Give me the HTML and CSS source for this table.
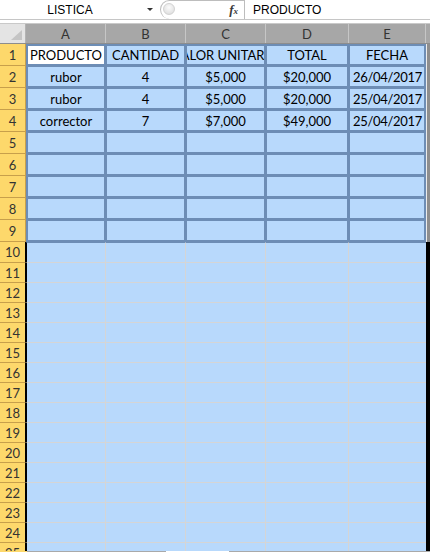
FILE: index.html
```html
<!DOCTYPE html>
<html lang="es">
<head>
<meta charset="utf-8">
<title>LISTICA</title>
<link rel="stylesheet" href="styles.css">
</head>
<body>
<div class="page">
  <div class="fbar">
    <div class="namebox">LISTICA</div>
    <div class="nb-arrow"><span class="tri"></span></div>
    <div class="pill">
      <span class="knob"></span>
      <span class="fx">f<span class="x">x</span></span>
    </div>
    <div class="formula">PRODUCTO</div>
  </div>
  <div class="fgap"></div>
  <div class="sheet">
    <div class="row hdr">
      <div class="corner"><span class="ctri"></span></div>
      <div class="ch">A</div><div class="ch">B</div><div class="ch">C</div><div class="ch">D</div><div class="ch">E</div><div class="ch edge"></div>
    </div>

    <div class="row dr first">
      <div class="rh">1</div>
      <div class="c active">PRODUCTO</div><div class="c">CANTIDAD</div><div class="c clip"><span>VALOR UNITARIO</span></div><div class="c">TOTAL</div><div class="c">FECHA</div><div class="edge"></div>
    </div>
    <div class="row dr">
      <div class="rh">2</div>
      <div class="c">rubor</div><div class="c">4</div><div class="c">$5,000</div><div class="c">$20,000</div><div class="c date">26/04/2017</div><div class="edge"></div>
    </div>
    <div class="row dr">
      <div class="rh">3</div>
      <div class="c">rubor</div><div class="c">4</div><div class="c">$5,000</div><div class="c">$20,000</div><div class="c date">25/04/2017</div><div class="edge"></div>
    </div>
    <div class="row dr">
      <div class="rh">4</div>
      <div class="c">corrector</div><div class="c">7</div><div class="c">$7,000</div><div class="c">$49,000</div><div class="c date">25/04/2017</div><div class="edge"></div>
    </div>
    <div class="row dr"><div class="rh">5</div><div class="c"></div><div class="c"></div><div class="c"></div><div class="c"></div><div class="c"></div><div class="edge"></div></div>
    <div class="row dr"><div class="rh">6</div><div class="c"></div><div class="c"></div><div class="c"></div><div class="c"></div><div class="c"></div><div class="edge"></div></div>
    <div class="row dr"><div class="rh">7</div><div class="c"></div><div class="c"></div><div class="c"></div><div class="c"></div><div class="c"></div><div class="edge"></div></div>
    <div class="row dr"><div class="rh">8</div><div class="c"></div><div class="c"></div><div class="c"></div><div class="c"></div><div class="c"></div><div class="edge"></div></div>
    <div class="row dr"><div class="rh">9</div><div class="c"></div><div class="c"></div><div class="c"></div><div class="c"></div><div class="c"></div><div class="edge"></div></div>

    <div class="row er after"><div class="rh">10</div><div class="c"></div><div class="c"></div><div class="c"></div><div class="c"></div><div class="c"></div><div class="edge"></div></div>
    <div class="row er"><div class="rh">11</div><div class="c"></div><div class="c"></div><div class="c"></div><div class="c"></div><div class="c"></div><div class="edge"></div></div>
    <div class="row er"><div class="rh">12</div><div class="c"></div><div class="c"></div><div class="c"></div><div class="c"></div><div class="c"></div><div class="edge"></div></div>
    <div class="row er"><div class="rh">13</div><div class="c"></div><div class="c"></div><div class="c"></div><div class="c"></div><div class="c"></div><div class="edge"></div></div>
    <div class="row er"><div class="rh">14</div><div class="c"></div><div class="c"></div><div class="c"></div><div class="c"></div><div class="c"></div><div class="edge"></div></div>
    <div class="row er"><div class="rh">15</div><div class="c"></div><div class="c"></div><div class="c"></div><div class="c"></div><div class="c"></div><div class="edge"></div></div>
    <div class="row er"><div class="rh">16</div><div class="c"></div><div class="c"></div><div class="c"></div><div class="c"></div><div class="c"></div><div class="edge"></div></div>
    <div class="row er"><div class="rh">17</div><div class="c"></div><div class="c"></div><div class="c"></div><div class="c"></div><div class="c"></div><div class="edge"></div></div>
    <div class="row er"><div class="rh">18</div><div class="c"></div><div class="c"></div><div class="c"></div><div class="c"></div><div class="c"></div><div class="edge"></div></div>
    <div class="row er"><div class="rh">19</div><div class="c"></div><div class="c"></div><div class="c"></div><div class="c"></div><div class="c"></div><div class="edge"></div></div>
    <div class="row er"><div class="rh">20</div><div class="c"></div><div class="c"></div><div class="c"></div><div class="c"></div><div class="c"></div><div class="edge"></div></div>
    <div class="row er"><div class="rh">21</div><div class="c"></div><div class="c"></div><div class="c"></div><div class="c"></div><div class="c"></div><div class="edge"></div></div>
    <div class="row er"><div class="rh">22</div><div class="c"></div><div class="c"></div><div class="c"></div><div class="c"></div><div class="c"></div><div class="edge"></div></div>
    <div class="row er"><div class="rh">23</div><div class="c"></div><div class="c"></div><div class="c"></div><div class="c"></div><div class="c"></div><div class="edge"></div></div>
    <div class="row er"><div class="rh">24</div><div class="c"></div><div class="c"></div><div class="c"></div><div class="c"></div><div class="c"></div><div class="edge"></div></div>
    <div class="row er"><div class="rh">25</div><div class="c"></div><div class="c"></div><div class="c"></div><div class="c"></div><div class="c"></div><div class="edge"></div></div>
  </div>
  <div class="bottom"><span class="b0"></span><span class="b1"></span><span class="b2"></span><span class="b3"></span></div>
</div>
</body>
</html>
```
FILE: styles.css
```css
* { box-sizing: border-box; }
html, body { margin: 0; padding: 0; background: #fff; }
.page {
  width: 430px;
  height: 552px;
  overflow: hidden;
  display: flex;
  flex-direction: column;
  font-family: Lato, "Liberation Sans", sans-serif;
}

/* formula bar */
.fbar {
  height: 20px;
  flex: none;
  display: flex;
  align-items: stretch;
  border-bottom: 1px solid #c6c6c6;
  font-family: "Liberation Sans", Arial, sans-serif;
  font-size: 12px;
  color: #000;
}
.namebox {
  width: 140px;
  display: flex;
  align-items: center;
  justify-content: center;
}
.nb-arrow {
  width: 20px;
  display: flex;
  align-items: center;
  justify-content: center;
}
.tri {
  width: 0; height: 0;
  border-left: 3px solid transparent;
  border-right: 3px solid transparent;
  border-top: 3px solid #333;
  margin-right: 1px;
}
.pill {
  width: 85px;
  display: flex;
  align-items: center;
  justify-content: space-between;
  border: 1px solid #bdbdbd;
  border-bottom: none;
  border-radius: 10px 0 0 10px;
  padding: 0 6px 0 2px;
  background: #fff;
}
.knob {
  width: 12px; height: 12px;
  border-radius: 50%;
  background: radial-gradient(circle at 50% 35%, #fbfbfb 0%, #e3e3e3 70%, #d0d0d0 100%);
  border: 1px solid #d2d2d2;
  margin-top: -3px;
}
.fx {
  font-family: "Liberation Serif", "Times New Roman", serif;
  font-style: italic;
  font-weight: bold;
  font-size: 13px;
  color: #3a3a3a;
}
.fx .x { font-size: 9px; }
.formula {
  flex: 1;
  display: flex;
  align-items: center;
  padding-left: 8px;
}
.fgap { height: 3px; flex: none; background: #fff; }

/* sheet */
.sheet {
  flex: 1;
  overflow: hidden;
  display: flex;
  flex-direction: column;
}
.row {
  display: grid;
  grid-template-columns: 26px 80px 80px 80px 83px 77px 4px;
  flex: none;
  font-size: 13px;
  color: #000;
}
.hdr {
  height: 21px;
  border-top: 1px solid #c9c9c9;
  border-bottom: 1px solid #8d8d8d;
  color: #333;
}
.corner {
  background: #e4e4e4;
  border-right: 1px solid #b3b3b3;
  display: flex;
  align-items: flex-end;
  justify-content: flex-end;
  padding: 0 3px 3px 0;
}
.ctri {
  width: 0; height: 0;
  border-left: 11px solid transparent;
  border-bottom: 10px solid #c4c4c4;
}
.ch {
  background: #a7a7a7;
  border-right: 1px solid #c6c6c6;
  display: flex;
  align-items: center;
  justify-content: center;
}
.ch.edge { border-right: none; background: #a7a7a7; }

.rh {
  background: #fdd86b;
  border-bottom: 1px solid #c79f4b;
  border-right: 1px solid #c79f4b;
  color: #333;
  display: flex;
  align-items: center;
  justify-content: center;
}
.c {
  background: #b8d9fc;
  display: flex;
  align-items: center;
  justify-content: center;
  white-space: nowrap;
  overflow: hidden;
}
.c.date { letter-spacing: -0.3px; padding-left: 1px; }

/* bordered data block rows 1-9 */
.dr { height: 22px; }
.dr .c {
  border-top: 1px solid #6d8db5;
  border-bottom: 2px solid #6d8db5;
  border-left: 1px solid #6d8db5;
  border-right: 2px solid #6d8db5;
}
.dr .c:nth-child(2) { border-left-width: 2px; }
.dr.first .c { border-top-width: 2px; }
.dr .c.active { background: #fff; }
.dr .edge {
  background: #8e8e8e;
  border-left: 1px solid #ececec;
}
.clip span { flex: none; }

/* empty selected rows 10+ */
.er { height: 20px; }
.er.after { height: 21px; }
.er.after .c { border-top: 1px solid #6d8db5; }
.er .rh { border-right-color: #000; }
.er .c {
  border-right: 1px solid #d5d5d5;
  border-bottom: 1px solid #d5d5d5;
}
.er .c:nth-child(2) { border-left: 1px solid #000; }
.er .c:nth-child(6) { border-right: none; }
.er .edge { background: #000; }

.bottom {
  height: 1px;
  flex: none;
  display: flex;
}
.b0 { width: 27px; background: #fdd86b; }
.b1 { width: 139px; background: #a9a9a9; }
.b2 { width: 63px; background: #fff; }
.b3 { flex: 1; background: #a9a9a9; }
```
